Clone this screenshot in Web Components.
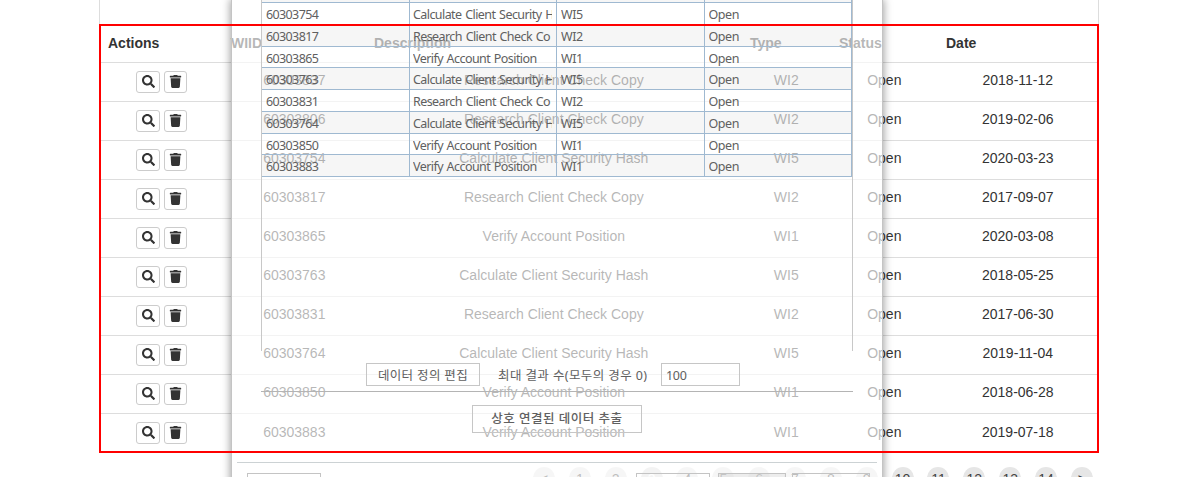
<!DOCTYPE html>
<html lang="ko"><head><meta charset="utf-8"><title>Work items</title>
<style>html,body{margin:0;height:477px;overflow:hidden;background:#fff}</style></head>
<body><work-page></work-page>
<script>
const define=(name,render)=>customElements.define(name,class extends HTMLElement{
  connectedCallback(){if(!this.shadowRoot)this.attachShadow({mode:'open'}).innerHTML=render(this)}
});
const items=[['60303837','Research Client Check Copy','WI2','2018-11-12'],['60303806','Research Client Check Copy','WI2','2019-02-06'],['60303754','Calculate Client Security Hash','WI5','2020-03-23'],['60303817','Research Client Check Copy','WI2','2017-09-07'],['60303865','Verify Account Position','WI1','2020-03-08'],['60303763','Calculate Client Security Hash','WI5','2018-05-25'],['60303831','Research Client Check Copy','WI2','2017-06-30'],['60303764','Calculate Client Security Hash','WI5','2019-11-04'],['60303850','Verify Account Position','WI1','2018-06-28'],['60303883','Verify Account Position','WI1','2019-07-18']];

define('icon-button',el=>`<style>
:host{display:block;box-sizing:border-box;width:var(--w,24px);height:22px;border:1px solid #ccc;border-radius:3px;background:#fff}
svg{display:block;margin:3px auto 0;fill:#333;width:13px;height:13px}</style>
${el.getAttribute('icon')==='search'
?'<svg viewBox="0 0 512 512"><path d="M505 442.7 405.3 343c-4.500-4.500-10.600-7-17-7H372c27.600-35.300 44-79.700 44-128C416 93.100 322.900 0 208 0S0 93.100 0 208s93.100 208 208 208c48.300 0 92.700-16.400 128-44v16.300c0 6.400 2.500 12.500 7 17l99.700 99.700c9.400 9.400 24.600 9.400 33.900 0l28.300-28.300c9.400-9.400 9.400-24.600.1-34zM208 336c-70.700 0-128-57.200-128-128s57.200-128 128-128 128 57.200 128 128-57.200 128-128 128z"/></svg>'
:'<svg viewBox="0 0 448 512"><path d="M432 32H312l-9.400-18.700A24 24 0 0 0 281.100 0H166.800a23.700 23.700 0 0 0-21.400 13.300L136 32H16A16 16 0 0 0 0 48v32a16 16 0 0 0 16 16h416a16 16 0 0 0 16-16V48a16 16 0 0 0-16-16zM32 128l21.200 339a48 48 0 0 0 47.900 45h245.800a48 48 0 0 0 47.900-45L416 128z"/></svg>'}`);

define('item-row',el=>{const d=items[el.getAttribute('index')];return `<style>
:host{display:grid;grid-template-columns:123px 143px 376px 89px 107px 160px;height:38px;border-bottom:1px solid #ddd;align-items:center;text-align:center}
:host([index="9"]){border-color:transparent}
.actions{display:flex;justify-content:center;gap:4px;padding-bottom:1px}
icon-button:last-child{--w:23px}
span{padding:0 .4px 4px 0}
:host([index="9"]) span{padding-bottom:2px}</style>
<div class="actions"><icon-button icon="search"></icon-button><icon-button icon="trash"></icon-button></div>
<span>${d[0]}</span><span>${d[1]}</span><span>${d[2]}</span><span>Open</span><span>${d[3]}</span>`});

define('item-table',()=>`<style>
:host{display:block;margin:0 99px;padding-top:26px;height:427px;width:1000px;box-sizing:content-box}
.body{padding:0 1px}
.head{display:grid;grid-template-columns:123px 143px 376px 89px 107px 160px;height:36px;line-height:35px;border-bottom:1px solid #ddd;font-weight:bold}
.head span{padding-left:8px}</style>
<div class="body"><div class="head"><span>Actions</span><span>WIID</span><span>Description</span><span>Type</span><span>Status</span><span>Date</span></div>
${items.map((_,i)=>`<item-row index="${i}"></item-row>`).join('')}</div>`);

define('page-list',()=>`<style>
:host{display:flex;gap:13.87px;padding:14px 0 0 533px}
span{width:22px;height:22px;border-radius:50%;background:#e6e6e6;text-align:center;line-height:24px;flex:none;color:#444}
.on{background:#ddd;color:#fff}</style>
${['&lt;',1,2,3,4,5,6,7,8,9,10,11,12,13,14,'&gt;'].map(x=>`<span class="${x===3?'on':''}">${x}</span>`).join('')}`);

define('result-grid',()=>`<style>
:host{display:block;box-sizing:border-box;height:351px;border:1px solid #c8c8c8;border-width:0 1px}
.row{display:grid;grid-template-columns:147.500px 147.500px 147.500px 147.500px;height:21.750px;box-sizing:border-box;border-bottom:1px solid #9fb9d1}
.row.cut{height:3px}
.row:nth-child(even){background:rgba(0,0,0,.035)}
.c{box-sizing:border-box;border-right:1px solid #9fb9d1;padding:0 4px;line-height:23.500px;overflow:hidden;white-space:nowrap;letter-spacing:-.45px}
.c>span{display:block;overflow:hidden}
.c:nth-child(1){letter-spacing:-.62px}
.c:nth-child(2){letter-spacing:-.57px;word-spacing:1px;padding-left:3.500px}</style>
<div class="row cut"><div class="c"></div><div class="c"></div><div class="c"></div><div class="c"></div></div>
${items.slice(2).map(d=>`<div class="row"><div class="c"><span>${d[0]}</span></div><div class="c"><span>${d[1].replace('Copy','Co').replace('Hash','H')}</span></div><div class="c"><span>${d[2]}</span></div><div class="c"><span>Open</span></div></div>`).join('')}`);

define('extract-dialog',()=>`<style>
:host{display:block;box-sizing:border-box;width:652px;height:497px;border:2px solid #c4c4c4;border-width:0 1px;background:rgba(255,255,255,.65);box-shadow:0 0 8px 1px rgba(0,0,0,.36);font:12.500px "Noto Sans","Noto Sans CJK KR",sans-serif;color:#606060}
.content{margin:0 29px;height:392px;box-sizing:border-box;border-bottom:1px solid #b4b4b4}
.controls{display:flex;align-items:center;height:23px;padding:12px 0 0 105px}
.box{box-sizing:border-box;border:1px solid #c6c6c6;height:23px;line-height:23px;text-align:center;white-space:nowrap}
.edit{width:114px;letter-spacing:.35px}.label{width:149px;margin:0 14px 0 18px;white-space:nowrap;letter-spacing:.4px}.num{width:79px;padding-left:4px;text-align:left;letter-spacing:-.3px}
.extract{width:170px;height:28px;line-height:26px;margin:13px 0 0 240px;font-weight:500;letter-spacing:.5px}
.foot{margin:29px 5px 0;border-top:1px solid #ccd2d4;padding:10px 0 0 10px;display:flex}
.foot i{height:20px;border:1px solid #c4c4c4;box-sizing:border-box}</style>
<div class="content"><result-grid></result-grid><div class="controls"><div class="box edit">데이터 정의 편집</div><div class="label">최대 결과 수(모두의 경우 0)</div><div class="box num">100</div></div></div>
<div class="box extract">상호 연결된 데이터 추출</div>
<div class="foot"><i style="width:74px"></i><i style="width:74px;margin-left:315px"></i><i style="width:68px;margin-left:8px;background:rgba(210,210,210,.4)"></i><i style="width:78px;margin-left:6px"></i></div>`);

define('work-page',()=>`<style>
:host{display:block;position:relative;width:1198px;height:477px;overflow:hidden;font:14px/20px "Liberation Sans",sans-serif;color:#333}
.edge{position:absolute;left:99px;top:0;width:998px;height:24px;border:1px solid #ddd;border-width:0 1px}
extract-dialog{position:absolute;left:231px;top:0}
.frame{position:absolute;left:99px;top:24px;width:1000px;height:429px;box-sizing:border-box;border:2px solid #f00}</style>
<item-table></item-table><page-list></page-list><div class="edge"></div><extract-dialog></extract-dialog><div class="frame"></div>`);
</script></body></html>
